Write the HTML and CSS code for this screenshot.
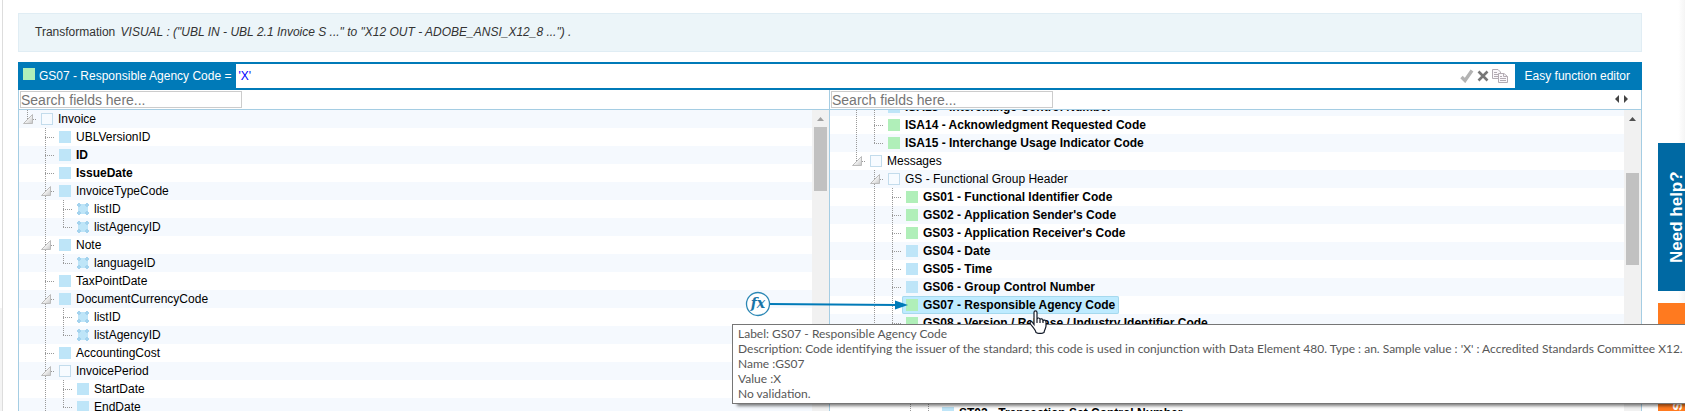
FILE: index.html
```html
<!DOCTYPE html>
<html lang="en">
<head>
<meta charset="utf-8">
<title>Transformation editor</title>
<link rel="stylesheet" href="styles.css">
</head>
<body>
<div class="gutter"></div>
<main class="page">
  <header class="banner">Transformation <em>VISUAL : ("UBL IN - UBL 2.1 Invoice S ..." to "X12 OUT - ADOBE_ANSI_X12_8 ...") .</em></header>

  <section class="formula">
    <label class="formula-label" for="formula"><span class="box green"></span>GS07 - Responsible Agency Code =</label>
    <input class="formula-input" id="formula" type="text" value="'X'">
    <div class="formula-tools">
      <button type="button" aria-label="Apply"><svg width="14" height="14" viewBox="0 0 14 14"><path d="M1.5 8 5 11.5 12 1.5" fill="none" stroke="#b3b3b3" stroke-width="3.4"/></svg></button>
      <button type="button" aria-label="Cancel"><svg width="12" height="14" viewBox="0 0 12 14"><path d="M1.5 2.5 10.500 11.500M10.500 2.500 1.500 11.500" fill="none" stroke="#777" stroke-width="2.600"/></svg></button>
      <button type="button" aria-label="Copy"><svg width="16" height="14" viewBox="0 0 16 14"><g fill="#faf7fa" stroke="#b3acb3"><path d="M.5.5H6L8.500 3V9.500H.5z"/><path d="M2 3.500H5M2 5.500H6M2 7.500H6"/><path d="M6.500 4.500H12L15.500 7.500V13.500H6.500z"/><path d="M11.500 4.500V7.500H15.500M8 7.500H10M8 9.500H14M8 11.500H14" fill="none"/></g></svg></button>
    </div>
    <button type="button" class="easy">Easy function editor</button>
  </section>

  <section class="panels">
    <div class="panel source">
      <div class="search"><input type="text" placeholder="Search fields here..." aria-label="Search source fields"></div>
      <div class="view">
        <ul class="tree">
          <li><i class="last"><svg class="exp" viewBox="0 0 10 10"><use href="#tri"/></svg></i><a href="#"><span class="box open"></span>Invoice</a></li>
          <li><i></i><i class="mid"></i><a href="#"><span class="box"></span>UBLVersionID</a></li>
          <li><i></i><i class="mid"></i><a href="#" class="bold"><span class="box"></span>ID</a></li>
          <li><i></i><i class="mid"></i><a href="#" class="bold"><span class="box"></span>IssueDate</a></li>
          <li><i></i><i class="mid"><svg class="exp" viewBox="0 0 10 10"><use href="#tri"/></svg></i><a href="#"><span class="box"></span>InvoiceTypeCode</a></li>
          <li><i></i><i class="line"></i><i class="mid"></i><a href="#"><span class="box attr"></span>listID</a></li>
          <li><i></i><i class="line"></i><i class="last"></i><a href="#"><span class="box attr"></span>listAgencyID</a></li>
          <li><i></i><i class="mid"><svg class="exp" viewBox="0 0 10 10"><use href="#tri"/></svg></i><a href="#"><span class="box"></span>Note</a></li>
          <li><i></i><i class="line"></i><i class="last"></i><a href="#"><span class="box attr"></span>languageID</a></li>
          <li><i></i><i class="mid"></i><a href="#"><span class="box"></span>TaxPointDate</a></li>
          <li><i></i><i class="mid"><svg class="exp" viewBox="0 0 10 10"><use href="#tri"/></svg></i><a href="#"><span class="box"></span>DocumentCurrencyCode</a></li>
          <li><i></i><i class="line"></i><i class="mid"></i><a href="#"><span class="box attr"></span>listID</a></li>
          <li><i></i><i class="line"></i><i class="last"></i><a href="#"><span class="box attr"></span>listAgencyID</a></li>
          <li><i></i><i class="mid"></i><a href="#"><span class="box"></span>AccountingCost</a></li>
          <li><i></i><i class="mid"><svg class="exp" viewBox="0 0 10 10"><use href="#tri"/></svg></i><a href="#"><span class="box open"></span>InvoicePeriod</a></li>
          <li><i></i><i class="line"></i><i class="mid"></i><a href="#"><span class="box"></span>StartDate</a></li>
          <li><i></i><i class="line"></i><i class="last"></i><a href="#"><span class="box"></span>EndDate</a></li>
        </ul>
        <div class="scroll"><svg width="7" height="4" viewBox="0 0 7 4"><path d="M0 4 3.500 0 7 4z" fill="#a0a0a0"/></svg><div class="thumb"></div></div>
      </div>
    </div>

    <div class="panel">
      <div class="search">
        <input type="text" placeholder="Search fields here..." aria-label="Search target fields">
        <button type="button" class="resize" aria-label="Resize panels"><svg width="13" height="8" viewBox="0 0 13 8"><path d="M4 0V8L0 4zM9 0V8L13 4z" fill="#444"/></svg></button>
      </div>
      <div class="view">
        <ul class="tree scrolled">
          <li><i></i><i class="line"></i><i class="mid"></i><a href="#" class="bold"><span class="box"></span>ISA13 - Interchange Control Number</a></li>
          <li><i></i><i class="line"></i><i class="mid"></i><a href="#" class="bold"><span class="box green"></span>ISA14 - Acknowledgment Requested Code</a></li>
          <li><i></i><i class="line"></i><i class="last"></i><a href="#" class="bold"><span class="box green"></span>ISA15 - Interchange Usage Indicator Code</a></li>
          <li><i></i><i class="last"><svg class="exp" viewBox="0 0 10 10"><use href="#tri"/></svg></i><a href="#"><span class="box open"></span>Messages</a></li>
          <li><i></i><i></i><i class="mid"><svg class="exp" viewBox="0 0 10 10"><use href="#tri"/></svg></i><a href="#"><span class="box open"></span>GS - Functional Group Header</a></li>
          <li><i></i><i></i><i class="line"></i><i class="mid"></i><a href="#" class="bold"><span class="box green"></span>GS01 - Functional Identifier Code</a></li>
          <li><i></i><i></i><i class="line"></i><i class="mid"></i><a href="#" class="bold"><span class="box green"></span>GS02 - Application Sender's Code</a></li>
          <li><i></i><i></i><i class="line"></i><i class="mid"></i><a href="#" class="bold"><span class="box green"></span>GS03 - Application Receiver's Code</a></li>
          <li><i></i><i></i><i class="line"></i><i class="mid"></i><a href="#" class="bold"><span class="box"></span>GS04 - Date</a></li>
          <li><i></i><i></i><i class="line"></i><i class="mid"></i><a href="#" class="bold"><span class="box"></span>GS05 - Time</a></li>
          <li><i></i><i></i><i class="line"></i><i class="mid"></i><a href="#" class="bold"><span class="box"></span>GS06 - Group Control Number</a></li>
          <li><i></i><i></i><i class="line"></i><i class="mid"></i><a href="#" class="bold selected"><span class="box green"></span>GS07 - Responsible Agency Code</a></li>
          <li><i></i><i></i><i class="line"></i><i class="last"></i><a href="#" class="bold"><span class="box green"></span>GS08 - Version / Release / Industry Identifier Code</a></li>
          <li></li>
          <li></li>
          <li></li>
          <li></li>
          <li><i></i><i></i><i></i><i></i><i class="line"></i><i class="mid"></i><a href="#" class="bold"><span class="box"></span>ST02 - Transaction Set Control Number</a></li>
        </ul>
        <div class="scroll"><svg width="7" height="4" viewBox="0 0 7 4"><path d="M0 4 3.500 0 7 4z" fill="#505050"/></svg><div class="thumb long"></div></div>
      </div>
    </div>

    <svg class="link" width="164" height="26" viewBox="0 0 164 26">
      <path d="M24 13 152 14" stroke="#007ab8" stroke-width="2"/>
      <path d="M150 9.500 163 14 150 18.500z" fill="#007ab8"/>
      <circle cx="13" cy="13" r="11.500" fill="#fff" stroke="#2b87b5" stroke-width="1.300"/>
      <text x="13" y="17" text-anchor="middle" class="fx">fx</text>
    </svg>
  </section>
</main>

<aside class="rail">
  <button type="button" class="tab">Need help?</button>
  <button type="button" class="tab orange">s</button>
</aside>

<div class="tip" role="tooltip">
  <div>Label: GS07 - Responsible Agency Code</div>
  <div>Description: Code identifying the issuer of the standard; this code is used in conjunction with Data Element 480. Type : an. Sample value : 'X' : Accredited Standards Committee X12.</div>
  <div>Name :GS07</div>
  <div>Value :X</div>
  <div>No validation.</div>
</div>

<svg class="pointer" width="18" height="24" viewBox="0 0 18 24"><path d="M5 14.500V2.500C5 .3 8 .3 8 2.500V9C8.500 7.500 11 7.700 11 9.500 11.500 8.300 14 8.700 14 10.500 15 9.600 17 10 17 12V16C17 18 15.500 19.500 15 22.500 12.500 23.700 9.500 23.700 7 22.500 6.500 20 4 17.500 1.500 14 .2 12 2.500 10.800 3.500 12.500z" fill="#fff" stroke="#111827" stroke-width="1.200"/><path d="M8 9V13M11 9.500V13M14 10.500V13" stroke="#111827" stroke-width="1.200"/></svg>

<svg class="defs" width="0" height="0"><defs><linearGradient id="shade" x1="0" y1="0" x2="1" y2="1"><stop offset=".4" stop-color="#fff"/><stop offset="1" stop-color="#c4c4c4"/></linearGradient><path id="tri" d="M9.500.5V9.500H.5z" fill="url(#shade)" stroke="#bbb"/></defs></svg>
</body>
</html>
```
FILE: styles.css
```css
* { box-sizing: border-box; }

body {
  margin: 0;
  height: 100vh;
  overflow: hidden;
  display: flex;
  position: relative;
  background: #fff;
  color: #000;
  font: 12px/18px "Liberation Sans", Arial, sans-serif;
}

button {
  border: 0;
  padding: 0;
  margin: 0;
  background: none;
  font: inherit;
  color: inherit;
  display: flex;
}

.gutter {
  flex: 0 0 3px;
  border-right: 1px solid #ddd;
  background: linear-gradient(#fff 75%, #f4f4f4 75%);
}

.page {
  flex: 1;
  min-width: 0;
  display: flex;
  flex-direction: column;
  padding: 13px 16px 0 15px;
}

.banner {
  flex: none;
  margin-bottom: 10px;
  padding: 9px 16px 10px;
  border: 1px solid #e0edf4;
  background: #ecf5f9;
  color: #333;
}

.banner em { margin-left: 2px; }

.formula {
  flex: none;
  display: flex;
  align-items: stretch;
  height: 28px;
  border: solid #007ab8;
  border-width: 2px 0;
}

.formula-label {
  display: flex;
  align-items: center;
  gap: 4px;
  padding: 0 5px;
  background: #007ab8;
  color: #fff;
}

.formula-label .box { margin-bottom: 4px; }

.formula-input {
  flex: 1;
  min-width: 0;
  border: 0;
  padding: 0 2px;
  background: #fff;
  color: #00f;
  font: inherit;
}

.formula-tools {
  display: flex;
  align-items: center;
  gap: 3px;
  padding-right: 7px;
}

.easy {
  align-items: center;
  padding: 0 12px 0 10px;
  background: #007ab8;
  color: #fff;
}

.panels {
  flex: 1;
  min-height: 0;
  display: flex;
  position: relative;
  border: solid #a5cde3;
  border-width: 0 1px;
}

.panel {
  flex: 1 1 50%;
  min-width: 0;
  display: flex;
  flex-direction: column;
}

.source { border-right: 1px solid #a5cde3; }

.search {
  flex: none;
  display: flex;
  justify-content: space-between;
  height: 20px;
  padding: 1px 13px 1px 1px;
  border-bottom: 1px solid #a5cde3;
}

.search input {
  width: 222px;
  height: 17px;
  padding: 0;
  border: 1px solid #ccc;
  font: 14px/15px "Liberation Sans", Arial, sans-serif;
}

.search input::placeholder { color: #757575; }

.resize { padding-top: 4px; }

.view {
  flex: 1;
  min-height: 0;
  display: flex;
  overflow: hidden;
}

.tree {
  flex: 1;
  min-width: 0;
  margin: 0;
  padding: 0;
  list-style: none;
}

.scrolled { margin-top: -12px; }

.tree li {
  display: flex;
  height: 18px;
  padding-left: 4px;
  white-space: nowrap;
}

.tree li:nth-child(odd) { background: #f5f9fe; }

.tree i {
  flex: 0 0 18px;
  padding: 4px 0 0 0;
  background-repeat: no-repeat;
}

.tree .line,
.tree .mid,
.tree .last {
  background-image:
    repeating-linear-gradient(#999 0 1px, transparent 1px 2px),
    repeating-linear-gradient(90deg, #999 0 1px, transparent 1px 2px);
  background-position: 4px 0, 4px 9px;
  background-size: 1px 18px, 10px 1px;
}

.tree .line { background-size: 1px 18px, 0 0; }
.tree .last { background-size: 1px 9px, 10px 1px; }

.exp {
  display: block;
  width: 10px;
  height: 10px;
}

.defs { position: absolute; }

.tree a {
  display: flex;
  align-items: center;
  gap: 5px;
  color: #000;
  text-decoration: none;
}

.bold { font-weight: bold; }

.tree .selected {
  margin-left: -4px;
  padding: 0 4px;
  border-radius: 2px;
  background: #beebff;
  box-shadow: inset 0 0 0 1px #a6d9ee;
}

.box {
  flex: none;
  width: 12px;
  height: 12px;
  background: #bee5f8;
}

.green { background: #b0efb9; }

.open {
  border: 1px solid #c3dcec;
  background: #f7fbff;
}

.attr {
  background:
    radial-gradient(circle at 2px 2px, #a4d3ee 2px, transparent 2px),
    radial-gradient(circle at 10px 2px, #a4d3ee 2px, transparent 2px),
    radial-gradient(circle at 2px 10px, #a4d3ee 2px, transparent 2px),
    radial-gradient(circle at 10px 10px, #a4d3ee 2px, transparent 2px),
    linear-gradient(#bee5f8, #bee5f8) center / 10px 10px no-repeat;
}

.scroll {
  flex: 0 0 17px;
  display: flex;
  flex-direction: column;
  align-items: center;
  padding-top: 7px;
  background: #f1f1f1;
}

.thumb {
  width: 13px;
  height: 64px;
  margin-top: 6px;
  background: #c1c1c1;
}

.long {
  height: 92px;
  margin-top: 52px;
}

.link {
  position: absolute;
  left: 726px;
  top: 201px;
}

.fx {
  font: italic bold 14px "DejaVu Serif", serif;
  fill: #1a75a8;
}

.rail {
  flex: 0 0 27px;
  display: flex;
  flex-direction: column;
  gap: 12px;
  padding-top: 143px;
  background: linear-gradient(90deg, #fff 75%, #f5f5f5);
}

.tab {
  flex: 0 0 148px;
  align-items: center;
  justify-content: center;
  writing-mode: vertical-rl;
  transform: rotate(180deg);
  padding-right: 10px;
  background: #0069a3;
  color: #fff;
  font: bold 17px/17px "Liberation Sans", Arial, sans-serif;
}

.orange {
  justify-content: flex-end;
  padding-bottom: 99px;
  background: #ff7a1f;
}

.tip {
  position: absolute;
  left: 732px;
  top: 324px;
  right: 0;
  padding: 1px 0 2px 5px;
  border: 1px solid #767676;
  border-right: 0;
  background: #fff;
  box-shadow: 4px 3px 3px -1px rgba(0, 0, 0, .5);
  color: #575757;
  font: 12px/15px Lato, "Open Sans", sans-serif;
  white-space: nowrap;
}

.pointer {
  position: absolute;
  left: 1029px;
  top: 310px;
}
```
